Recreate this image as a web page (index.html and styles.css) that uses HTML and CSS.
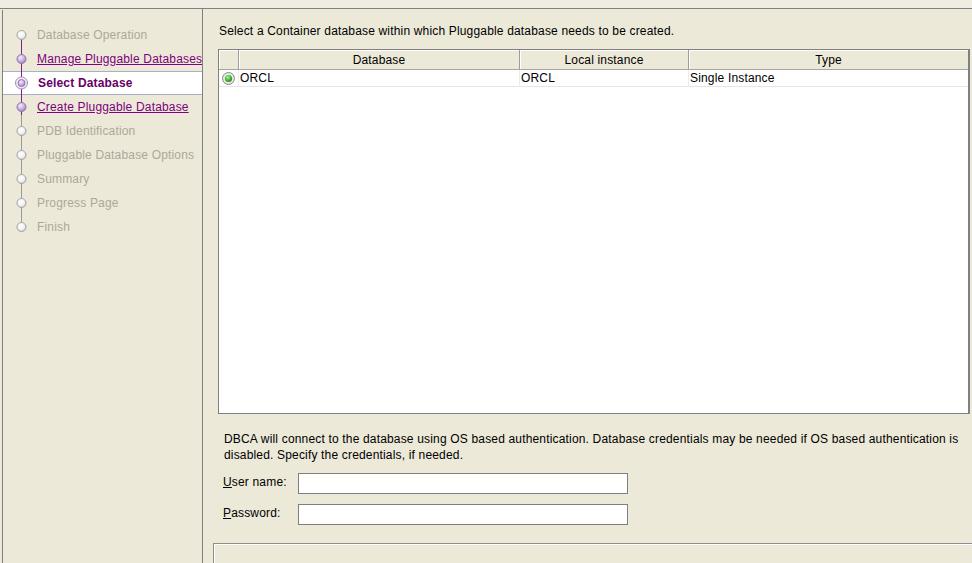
FILE: index.html
```html
<!DOCTYPE html>
<html lang="en">
<head>
<meta charset="utf-8">
<title>Select Database</title>
<link rel="stylesheet" href="styles.css">
</head>
<body>
<svg class="defs" width="0" height="0" aria-hidden="true">
  <defs>
    <radialGradient id="gDis" cx="40%" cy="35%" r="70%">
      <stop offset="0" stop-color="#ffffff"/>
      <stop offset="0.6" stop-color="#f2f2f2"/>
      <stop offset="1" stop-color="#c8c8c8"/>
    </radialGradient>
    <radialGradient id="gVis" cx="40%" cy="35%" r="70%">
      <stop offset="0" stop-color="#f4eefa"/>
      <stop offset="0.55" stop-color="#c9b3dc"/>
      <stop offset="1" stop-color="#9a7ab5"/>
    </radialGradient>
    <radialGradient id="gRing" cx="45%" cy="40%" r="65%">
      <stop offset="0" stop-color="#ffffff"/>
      <stop offset="1" stop-color="#e6dcef"/>
    </radialGradient>
    <radialGradient id="gGreen" cx="40%" cy="35%" r="70%">
      <stop offset="0" stop-color="#b6f0a4"/>
      <stop offset="0.5" stop-color="#4cc23a"/>
      <stop offset="1" stop-color="#1f7d16"/>
    </radialGradient>
    <radialGradient id="gRadio" cx="50%" cy="50%" r="60%">
      <stop offset="0" stop-color="#ffffff"/>
      <stop offset="1" stop-color="#dcdcd4"/>
    </radialGradient>
  </defs>
</svg>

<div class="topbar"></div>
<div class="main">
  <nav class="steps">
    <div class="step disabled">
      <svg viewBox="0 0 34 24"><line class="ln-p" x1="18.5" y1="16.5" x2="18.5" y2="24"/><circle cx="18.5" cy="12" r="4.5" fill="url(#gDis)" stroke="#a3a3a3"/></svg>
      <span class="label">Database Operation</span>
    </div>
    <div class="step link">
      <svg viewBox="0 0 34 24"><line class="ln-p" x1="18.5" y1="0" x2="18.5" y2="24"/><circle cx="18.5" cy="12" r="4.5" fill="url(#gVis)" stroke="#9678ad"/></svg>
      <span class="label">Manage Pluggable Databases</span>
    </div>
    <div class="step current">
      <svg viewBox="0 0 34 24"><line class="ln-p" x1="18.5" y1="0" x2="18.5" y2="24"/><circle cx="18.5" cy="12" r="6" fill="url(#gRing)" stroke="#a68cbd"/><circle cx="18.5" cy="12" r="3.5" fill="url(#gVis)" stroke="#9678ad"/></svg>
      <span class="label">Select Database</span>
    </div>
    <div class="step link">
      <svg viewBox="0 0 34 24"><line class="ln-p" x1="18.5" y1="0" x2="18.5" y2="20"/><line class="ln-g" x1="18.5" y1="20" x2="18.5" y2="24"/><circle cx="18.5" cy="12" r="4.5" fill="url(#gVis)" stroke="#9678ad"/></svg>
      <span class="label">Create Pluggable Database</span>
    </div>
    <div class="step disabled">
      <svg viewBox="0 0 34 24"><line class="ln-g" x1="18.5" y1="0" x2="18.5" y2="24"/><circle cx="18.5" cy="12" r="4.5" fill="url(#gDis)" stroke="#a3a3a3"/></svg>
      <span class="label">PDB Identification</span>
    </div>
    <div class="step disabled">
      <svg viewBox="0 0 34 24"><line class="ln-g" x1="18.5" y1="0" x2="18.5" y2="24"/><circle cx="18.5" cy="12" r="4.5" fill="url(#gDis)" stroke="#a3a3a3"/></svg>
      <span class="label">Pluggable Database Options</span>
    </div>
    <div class="step disabled">
      <svg viewBox="0 0 34 24"><line class="ln-g" x1="18.5" y1="0" x2="18.5" y2="24"/><circle cx="18.5" cy="12" r="4.5" fill="url(#gDis)" stroke="#a3a3a3"/></svg>
      <span class="label">Summary</span>
    </div>
    <div class="step disabled">
      <svg viewBox="0 0 34 24"><line class="ln-g" x1="18.5" y1="0" x2="18.5" y2="24"/><circle cx="18.5" cy="12" r="4.5" fill="url(#gDis)" stroke="#a3a3a3"/></svg>
      <span class="label">Progress Page</span>
    </div>
    <div class="step disabled">
      <svg viewBox="0 0 34 24"><line class="ln-g" x1="18.5" y1="0" x2="18.5" y2="8"/><circle cx="18.5" cy="12" r="4.5" fill="url(#gDis)" stroke="#a3a3a3"/></svg>
      <span class="label">Finish</span>
    </div>
  </nav>

  <section class="content">
    <p class="intro">Select a Container database within which Pluggable database needs to be created.</p>

    <div class="table">
      <div class="thead">
        <div class="th"></div>
        <div class="th">Database</div>
        <div class="th">Local instance</div>
        <div class="th last">Type</div>
      </div>
      <div class="tr">
        <div class="td radio">
          <svg viewBox="0 0 13 13"><circle cx="6.5" cy="6.5" r="6" fill="url(#gRadio)" stroke="#8a8a86"/><circle cx="6.5" cy="6.5" r="3.6" fill="url(#gGreen)"/></svg>
        </div>
        <div class="td">ORCL</div>
        <div class="td">ORCL</div>
        <div class="td last">Single Instance</div>
      </div>
    </div>

    <p class="note">DBCA will connect to the database using OS based authentication. Database credentials may be needed if OS based authentication is disabled. Specify the credentials, if needed.</p>

    <div class="form">
      <label class="field"><span class="lbl"><u>U</u>ser name:</span><input class="input" type="text"></label>
      <label class="field"><span class="lbl"><u>P</u>assword:</span><input class="input" type="password"></label>
    </div>

    <div class="footer-panel"></div>
  </section>
</div>
</body>
</html>
```

FILE: styles.css
```css
html, body {
  margin: 0;
  padding: 0;
}

body {
  background: #ece9d8;
  font-family: "Liberation Sans", Arial, sans-serif;
  font-size: 12px;
  letter-spacing: 0.17px;
  color: #000;
  width: 972px;
  height: 563px;
  overflow: hidden;
}

.defs {
  position: absolute;
  width: 0;
  height: 0;
}

.topbar {
  height: 8px;
  background: #efede3;
  border-bottom: 1px solid #808080;
}

.main {
  display: flex;
  height: 554px;
}

/* ---------- left step list ---------- */
.steps {
  flex: none;
  width: 199px;
  margin-left: 2px;
  margin-top: 1px;
  padding-top: 13px;
  border-left: 1px solid #808080;
}

.step {
  display: flex;
  align-items: center;
  height: 24px;
  white-space: nowrap;
  overflow: hidden;
}

.step svg {
  flex: none;
  display: block;
  width: 34px;
  height: 24px;
}

.ln-p {
  stroke: #7d2386;
  stroke-width: 1;
}

.ln-g {
  stroke: #9a9a9a;
  stroke-width: 1;
}

.label {
  line-height: 24px;
}

.disabled .label {
  color: #aca899;
}

.link .label {
  color: #800080;
  text-decoration: underline;
}

.current {
  background: #fff;
  box-shadow: inset 0 1px 0 #a7b0c6, inset 0 -1px 0 #a7b0c6;
}

.current .label {
  font-weight: bold;
  color: #660066;
  margin-left: 1px;
}

/* ---------- right content ---------- */
.content {
  flex: 1;
  min-width: 0;
  border-left: 1px solid #808080;
  padding: 14px 0 0 15px;
}

.intro {
  margin: 0 0 10px 1px;
  line-height: 16px;
}

.table {
  width: 752px;
  height: 365px;
  box-sizing: border-box;
  border: 1px solid #808080;
  border-right-width: 2px;
  background: #fff;
}

.thead,
.tr {
  display: grid;
  grid-template-columns: 20px 281px 169px 279px;
}

.th {
  height: 20px;
  box-sizing: border-box;
  padding-top: 2px;
  background: #ece9d8;
  border-right: 1px solid #9d9d9d;
  border-bottom: 1px solid #a5a5a5;
  box-shadow: inset 1px 1px 0 #fff;
  text-align: center;
  line-height: 17px;
}

.th.last {
  border-right: none;
}

.td {
  height: 16px;
  line-height: 16px;
  padding-left: 1px;
  border-right: 1px solid #ebebeb;
  border-bottom: 1px solid #e6e6e6;
  white-space: nowrap;
}

.td.last {
  border-right: none;
}

.td.radio {
  padding-left: 0;
  display: flex;
  align-items: center;
  justify-content: center;
}

.td.radio svg {
  width: 13px;
  height: 13px;
  display: block;
}

.note {
  margin: 17px 0 0 6px;
  width: 744px;
  line-height: 16px;
}

.form {
  margin: 10px 0 0 5px;
  display: flex;
  flex-direction: column;
  gap: 10px;
}

.field {
  display: flex;
  align-items: flex-start;
}

.lbl {
  width: 75px;
  flex: none;
  line-height: 18px;
}

.input {
  width: 330px;
  height: 21px;
  box-sizing: border-box;
  margin: 0;
  padding: 0 2px;
  border: 1px solid #7f7f7f;
  background: #fff;
  font: inherit;
  outline: none;
}

.footer-panel {
  margin: 18px -20px 0 -5px;
  height: 40px;
  border: 1px solid #8f8f8f;
  box-shadow: inset 1px 1px 0 #fff;
}
```
